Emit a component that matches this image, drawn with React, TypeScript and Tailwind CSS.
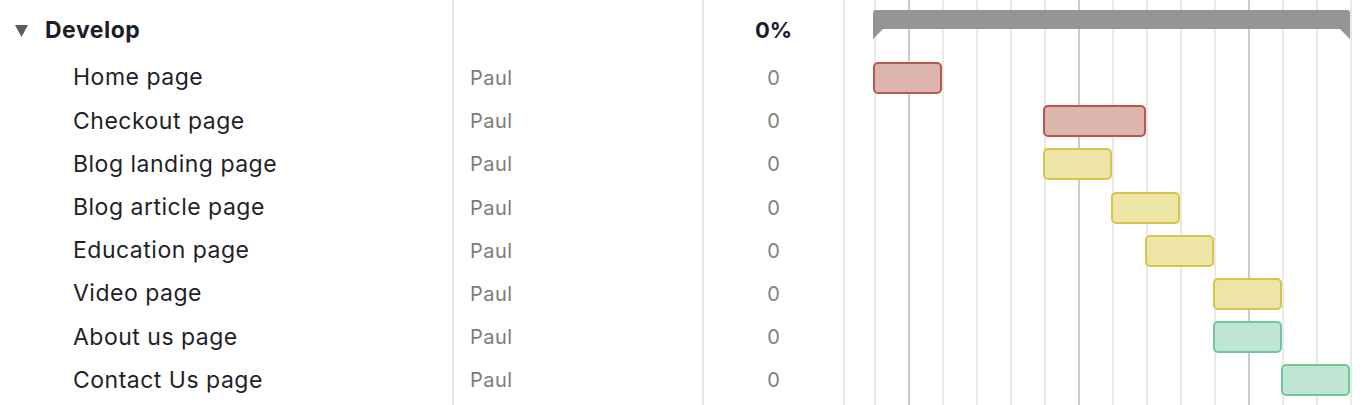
import React from "react";

type Task = { name: string; start: number; span: number; color: "red" | "yellow" | "green" };

const tasks: Task[] = [
  { name: "Home page", start: 0, span: 2, color: "red" },
  { name: "Checkout page", start: 5, span: 3, color: "red" },
  { name: "Blog landing page", start: 5, span: 2, color: "yellow" },
  { name: "Blog article page", start: 7, span: 2, color: "yellow" },
  { name: "Education page", start: 8, span: 2, color: "yellow" },
  { name: "Video page", start: 10, span: 2, color: "yellow" },
  { name: "About us page", start: 10, span: 2, color: "green" },
  { name: "Contact Us page", start: 12, span: 2, color: "green" },
];

const barClass: Record<Task["color"], string> = {
  red: "bg-[#dcb5ad] border-[#b9574a]",
  yellow: "bg-[#ede5a6] border-[#d5c54e]",
  green: "bg-[#bfe6d3] border-[#74c59a]",
};

const CELL = 34;

export default function App() {
  const gridCells = Array.from({ length: 15 }, (_, i) => i);
  return (
    <div
      className="w-[1364px] h-[405px] overflow-hidden bg-white flex"
      style={{ fontFamily: "Inter, 'Open Sans', sans-serif" }}
    >
      {/* Name column */}
      <div className="w-[452px] shrink-0 flex flex-col">
        <div className="h-[56.4px] pt-[4px] flex items-center">
          <svg width="13" height="12" viewBox="0 0 13 12" className="ml-[15px] mt-[1px]">
            <path d="M0 0 H13 L6.5 12 Z" fill="#5c5c5c" />
          </svg>
          <span className="ml-[17px] text-[23px] tracking-[0.5px] font-bold text-[#1c1c26] leading-none">
            Develop
          </span>
        </div>
        {tasks.map((t) => (
          <div key={t.name} className="h-[43.2px] flex items-center pl-[73px]">
            <span className="text-[23px] tracking-[0.5px] text-[#1f1f29] leading-none">{t.name}</span>
          </div>
        ))}
      </div>

      {/* Assignee column */}
      <div className="w-[250px] shrink-0 border-l-2 border-[#e8e8e8] flex flex-col">
        <div className="h-[56.4px]" />
        {tasks.map((t) => (
          <div key={t.name} className="h-[43.2px] flex items-center pl-[16px]">
            <span className="text-[20px] tracking-[0.5px] text-[#7b7b7b] leading-none">Paul</span>
          </div>
        ))}
      </div>

      {/* Progress column */}
      <div className="w-[141px] shrink-0 border-l-2 border-[#e8e8e8] flex flex-col">
        <div className="h-[56.4px] pt-[4px] flex items-center justify-center">
          <span className="text-[22px] font-bold text-[#1c1c26] leading-none">0%</span>
        </div>
        {tasks.map((t) => (
          <div key={t.name} className="h-[43.2px] flex items-center justify-center">
            <span className="text-[20px] text-[#808080] leading-none">0</span>
          </div>
        ))}
      </div>

      {/* Gantt column */}
      <div className="relative flex-1 border-l-2 border-[#e8e8e8]">
        <div className="absolute inset-0 flex">
          <div className="w-[29px] shrink-0" />
          {gridCells.map((i) => (
            <div
              key={i}
              className={
                "w-[34px] shrink-0 border-l-2 " +
                (i % 5 === 1 ? "border-[#cbcbcb]" : "border-[#e9e9e9]")
              }
            />
          ))}
        </div>
        <div className="relative flex flex-col">
          <div className="h-[56.4px] pt-[10px] pl-[28px]">
            <svg width="477" height="29" viewBox="0 0 477 29">
              <path
                d="M0 3 Q0 0 3 0 H474 Q477 0 477 3 V29 L467 19 H10 L0 29 Z"
                fill="#959595"
              />
            </svg>
          </div>
          {tasks.map((t) => (
            <div key={t.name} className="h-[43.2px] flex items-center">
              <div
                className={"h-[32px] rounded-[5px] border-2 " + barClass[t.color]}
                style={{ marginLeft: 28 + t.start * CELL, width: t.span * CELL + 1 }}
              />
            </div>
          ))}
        </div>
      </div>
    </div>
  );
}
